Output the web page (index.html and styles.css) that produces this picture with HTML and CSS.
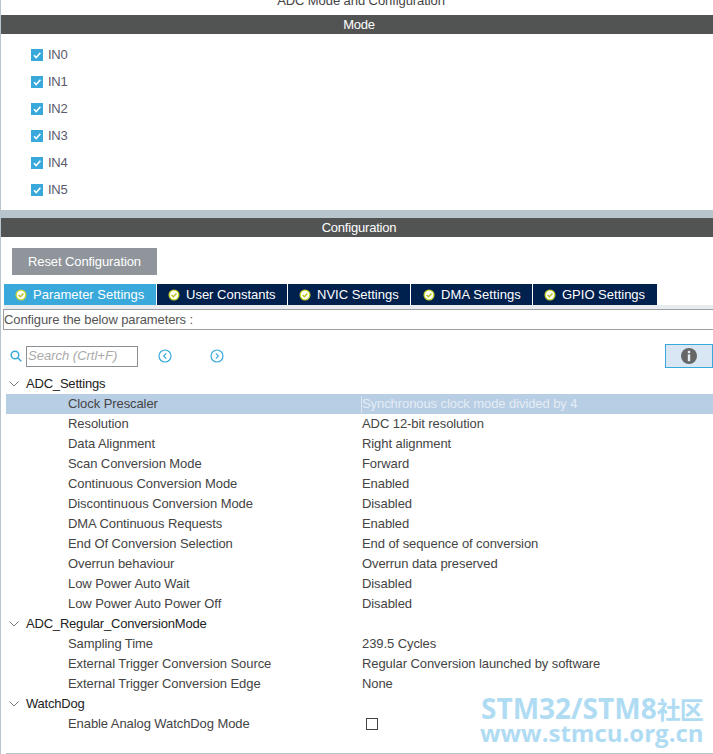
FILE: index.html
```html
<!DOCTYPE html>
<html>
<head>
    <title>ADC Mode and Configuration</title>
    <link rel="stylesheet" href="styles.css">
</head>
<body>
    <div class="page">
        <div class="page-title">ADC Mode and Configuration</div>
        <div class="bar bar-mode">Mode</div>
        <div class="mode-list">
            <label class="mode-item"><span class="check"><svg viewBox="0 0 12 12" width="12" height="12"><path d="M3 6.2 5.2 8.6 9.4 3.8" fill="none" stroke="#fff" stroke-width="1.5"/></svg></span>IN0</label>
            <label class="mode-item"><span class="check"><svg viewBox="0 0 12 12" width="12" height="12"><path d="M3 6.2 5.2 8.6 9.4 3.8" fill="none" stroke="#fff" stroke-width="1.5"/></svg></span>IN1</label>
            <label class="mode-item"><span class="check"><svg viewBox="0 0 12 12" width="12" height="12"><path d="M3 6.2 5.2 8.6 9.4 3.8" fill="none" stroke="#fff" stroke-width="1.5"/></svg></span>IN2</label>
            <label class="mode-item"><span class="check"><svg viewBox="0 0 12 12" width="12" height="12"><path d="M3 6.2 5.2 8.6 9.4 3.8" fill="none" stroke="#fff" stroke-width="1.5"/></svg></span>IN3</label>
            <label class="mode-item"><span class="check"><svg viewBox="0 0 12 12" width="12" height="12"><path d="M3 6.2 5.2 8.6 9.4 3.8" fill="none" stroke="#fff" stroke-width="1.5"/></svg></span>IN4</label>
            <label class="mode-item"><span class="check"><svg viewBox="0 0 12 12" width="12" height="12"><path d="M3 6.2 5.2 8.6 9.4 3.8" fill="none" stroke="#fff" stroke-width="1.5"/></svg></span>IN5</label>
        </div>
        <div class="divider"></div>
        <div class="bar">Configuration</div>
        <button class="reset-btn">Reset Configuration</button>
        <div class="tabs">
            <div class="tab tab-active"><span class="ok"><svg viewBox="0 0 12 12" width="12" height="12"><circle cx="6" cy="6" r="5.5" fill="#c9d62e"/><circle cx="6" cy="6" r="4.2" fill="#fff"/><path d="M3.6 6 5.4 7.8 8.4 4.6" fill="none" stroke="#b5c21e" stroke-width="1.4"/></svg></span>Parameter Settings</div>
            <div class="tab tab-user"><span class="ok"><svg viewBox="0 0 12 12" width="12" height="12"><circle cx="6" cy="6" r="5.5" fill="#c9d62e"/><circle cx="6" cy="6" r="4.2" fill="#fff"/><path d="M3.6 6 5.4 7.8 8.4 4.6" fill="none" stroke="#b5c21e" stroke-width="1.4"/></svg></span>User Constants</div>
            <div class="tab tab-nvic"><span class="ok"><svg viewBox="0 0 12 12" width="12" height="12"><circle cx="6" cy="6" r="5.5" fill="#c9d62e"/><circle cx="6" cy="6" r="4.2" fill="#fff"/><path d="M3.6 6 5.4 7.8 8.4 4.6" fill="none" stroke="#b5c21e" stroke-width="1.4"/></svg></span>NVIC Settings</div>
            <div class="tab tab-dma"><span class="ok"><svg viewBox="0 0 12 12" width="12" height="12"><circle cx="6" cy="6" r="5.5" fill="#c9d62e"/><circle cx="6" cy="6" r="4.2" fill="#fff"/><path d="M3.6 6 5.4 7.8 8.4 4.6" fill="none" stroke="#b5c21e" stroke-width="1.4"/></svg></span>DMA Settings</div>
            <div class="tab tab-gpio"><span class="ok"><svg viewBox="0 0 12 12" width="12" height="12"><circle cx="6" cy="6" r="5.5" fill="#c9d62e"/><circle cx="6" cy="6" r="4.2" fill="#fff"/><path d="M3.6 6 5.4 7.8 8.4 4.6" fill="none" stroke="#b5c21e" stroke-width="1.4"/></svg></span>GPIO Settings</div>
        </div>
        <div class="tab-strip"></div>
        <div class="hint">Configure the below parameters :</div>
        <div class="search-row">
            <svg class="search-icon" viewBox="0 0 12 12" width="12" height="12"><circle cx="5" cy="5" r="3.8" fill="none" stroke="#39a9dc" stroke-width="1.5"/><path d="M7.8 7.8 11.2 11.2" stroke="#39a9dc" stroke-width="1.6"/></svg>
            <div class="search-box">Search (Crtl+F)</div>
            <svg class="nav-prev" viewBox="0 0 14 14" width="14" height="14"><circle cx="7" cy="7" r="6" fill="none" stroke="#39a9dc" stroke-width="1.2"/><path d="M8.2 4.4 5.6 7 8.2 9.6" fill="none" stroke="#39a9dc" stroke-width="1.2"/></svg>
            <svg class="nav-next" viewBox="0 0 14 14" width="14" height="14"><circle cx="7" cy="7" r="6" fill="none" stroke="#39a9dc" stroke-width="1.2"/><path d="M5.8 4.4 8.4 7 5.8 9.6" fill="none" stroke="#39a9dc" stroke-width="1.2"/></svg>
            <div class="info-btn"><svg viewBox="0 0 16 16" width="16" height="16"><circle cx="8" cy="8" r="8" fill="#666"/><rect x="6.8" y="2.8" width="2.4" height="2.4" fill="#e6eef6"/><rect x="6.8" y="6.4" width="2.4" height="6.8" fill="#e6eef6"/></svg></div>
        </div>
        <div class="tree">
            <div class="group"><svg class="caret" viewBox="0 0 10 6" width="10" height="6"><path d="M.5.5 5 5 9.5.5" fill="none" stroke="#777"/></svg>ADC_Settings</div>
            <div class="row row-selected"><span class="name">Clock Prescaler</span><span class="value">Synchronous clock mode divided by 4</span></div>
            <div class="row"><span class="name">Resolution</span><span class="value">ADC 12-bit resolution</span></div>
            <div class="row"><span class="name">Data Alignment</span><span class="value">Right alignment</span></div>
            <div class="row"><span class="name">Scan Conversion Mode</span><span class="value">Forward</span></div>
            <div class="row"><span class="name">Continuous Conversion Mode</span><span class="value">Enabled</span></div>
            <div class="row"><span class="name">Discontinuous Conversion Mode</span><span class="value">Disabled</span></div>
            <div class="row"><span class="name">DMA Continuous Requests</span><span class="value">Enabled</span></div>
            <div class="row"><span class="name">End Of Conversion Selection</span><span class="value">End of sequence of conversion</span></div>
            <div class="row"><span class="name">Overrun behaviour</span><span class="value">Overrun data preserved</span></div>
            <div class="row"><span class="name">Low Power Auto Wait</span><span class="value">Disabled</span></div>
            <div class="row"><span class="name">Low Power Auto Power Off</span><span class="value">Disabled</span></div>
            <div class="group"><svg class="caret" viewBox="0 0 10 6" width="10" height="6"><path d="M.5.5 5 5 9.5.5" fill="none" stroke="#777"/></svg>ADC_Regular_ConversionMode</div>
            <div class="row"><span class="name">Sampling Time</span><span class="value">239.5 Cycles</span></div>
            <div class="row"><span class="name">External Trigger Conversion Source</span><span class="value">Regular Conversion launched by software</span></div>
            <div class="row"><span class="name">External Trigger Conversion Edge</span><span class="value">None</span></div>
            <div class="group"><svg class="caret" viewBox="0 0 10 6" width="10" height="6"><path d="M.5.5 5 5 9.5.5" fill="none" stroke="#777"/></svg>WatchDog</div>
            <div class="row"><span class="name">Enable Analog WatchDog Mode</span><span class="value"><span class="empty-check"></span></span></div>
        </div>
        <div class="bottom-line"></div>
        <div class="watermark">
            <div class="wm-top">STM32/STM8<span class="wm-cjk">社区</span></div>
            <div class="wm-bottom">www.stmcu.org.cn</div>
        </div>
    </div>
</body>
</html>
```

FILE: styles.css
```css
html, body { margin: 0; padding: 0; background: #fff; }
body { width: 713px; height: 754px; overflow: hidden; font-family: "Liberation Sans", Arial, sans-serif; font-size: 13px; color: #444; }
.page { position: relative; height: 754px; overflow: hidden; border-left: 1px solid #b9c5cc; box-sizing: border-box; }

.page-title { height: 15px; line-height: 14px; margin-top: -6px; margin-bottom: 6px; padding-left: 8px; box-sizing: border-box; text-align: center; letter-spacing: -.08px; color: #444; }
.bar { height: 19px; line-height: 19px; padding-left: 4px; background: #525453; color: #fff; text-align: center; letter-spacing: -.2px; }

.mode-list { height: 176px; padding-top: 7px; box-sizing: border-box; }
.mode-item { display: flex; align-items: center; height: 27px; padding-left: 30px; color: #5a5a6a; letter-spacing: -.3px; }
.check { width: 12px; height: 12px; margin-right: 5px; background: #39a9dc; display: block; }
.check svg { display: block; }
.divider { height: 8px; background: #b9c5cc; }

.reset-btn { display: block; width: 145px; height: 27px; margin: 11px 0 9px 11px; border: 0; padding: 0; background: #8f959b; color: #fff; font: 13px "Liberation Sans", Arial, sans-serif; letter-spacing: -.1px; }

.tabs { display: flex; height: 21px; padding-left: 3px; gap: 1px; }
.tab { display: flex; align-items: center; background: #00204e; color: #fff; box-sizing: border-box; padding-left: 11px; }
.tab-active { background: #39a9dc; width: 152px; }
.tab-user { width: 130px; }
.tab-nvic { width: 122px; }
.tab-dma { width: 121px; padding-left: 12px; letter-spacing: .1px; }
.tab-gpio { width: 124px; }
.ok { display: block; width: 12px; height: 12px; margin-right: 6px; }
.ok svg { display: block; }
.tab-strip { height: 4px; margin-left: 3px; background: #e9ecef; }

.hint { height: 21px; line-height: 20px; margin-left: 2px; border: 1px solid #9a9fa3; border-right: 0; box-sizing: border-box; letter-spacing: -.1px; color: #555; }

.search-row { display: flex; align-items: center; height: 24px; margin-top: 14px; padding-left: 9px; }
.search-icon { margin-right: 4px; }
.search-box { width: 112px; height: 21px; line-height: 17px; padding-left: 1px; border: 1px solid #8a8f94; box-sizing: border-box; font-style: italic; color: #aaa; }
.nav-prev { margin-left: 20px; }
.nav-next { margin-left: 38px; }
.info-btn { display: flex; align-items: center; justify-content: center; width: 48px; height: 24px; margin-left: auto; background: #d9e7f4; border: 1px solid #39a9dc; box-sizing: border-box; }

.tree { margin-top: 6px; margin-left: 5px; }
.group { display: flex; align-items: center; height: 20px; padding-bottom: 2px; box-sizing: border-box; color: #222; letter-spacing: -.2px; }
.caret { margin: 2px 7px 0 3px; }
.row { display: flex; align-items: center; height: 20px; padding-bottom: 2px; box-sizing: border-box; color: #444; letter-spacing: -.08px; }
.row-selected { background: #b8cee4; }
.name { width: 355px; padding-left: 62px; box-sizing: border-box; flex: none; }
.value { flex: 1; padding-left: 1px; }
.row-selected .value { color: #e4ecf4; border-left: 1px solid #dce6f0; padding-left: 0; margin-bottom: -2px; padding-bottom: 2px; }
.empty-check { display: block; width: 10px; height: 10px; margin: 2px 0 0 4px; border: 1px solid #444; }

.bottom-line { position: absolute; left: 5px; right: 0; bottom: 0; height: 1px; background: #b9c5cc; }
.watermark { position: absolute; left: 479px; top: 694px; color: #b0dcf3; font-family: "Open Sans", sans-serif; font-weight: bold; white-space: nowrap; }
.wm-top { height: 27px; font-size: 28px; line-height: 28px; margin-left: 1px; }
.wm-cjk { font-size: 24px; line-height: 24px; letter-spacing: -1px; font-family: "Noto Sans CJK SC", sans-serif; }
.wm-bottom { font-size: 24px; line-height: 24px; }
```
